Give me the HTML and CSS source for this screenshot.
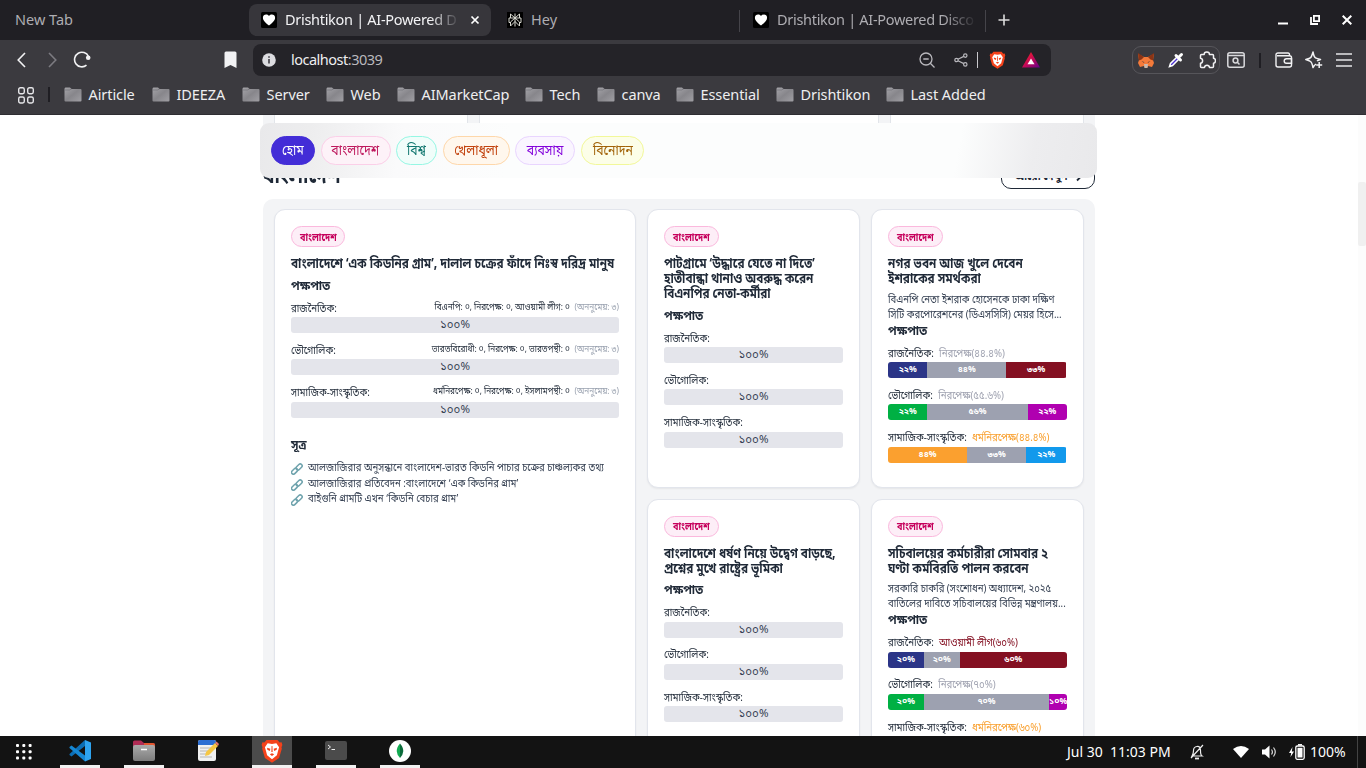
FILE: index.html
```html
<!DOCTYPE html>
<html lang="bn">
<head>
<meta charset="utf-8">
<title>Drishtikon | AI-Powered Discovery</title>
<link rel="stylesheet" href="styles.css">
</head>
<body>
<svg class="defs" width="0" height="0">
  <defs>
    <linearGradient id="folderFill" x1="0" y1="0" x2="1" y2="1"><stop offset="0" stop-color="#a5a4a9"/><stop offset=".5" stop-color="#87868b"/><stop offset="1" stop-color="#a09fa4"/></linearGradient>
    <linearGradient id="batFill" x1="0" y1="0" x2="1" y2="1"><stop offset="0" stop-color="#ff2a12"/><stop offset=".5" stop-color="#c80a55"/><stop offset="1" stop-color="#64008c"/></linearGradient>
    <linearGradient id="fileFill" x1="0" y1="0" x2="0" y2="1"><stop offset="0" stop-color="#aaa"/><stop offset="1" stop-color="#7d7d7d"/></linearGradient>
    <symbol id="folder" viewBox="0 0 18 15"><path d="M.5 2Q.5.5 1.500.5H6L7.500 2H16.500Q17.500 2 17.500 3V13.500Q17.500 14.500 16.500 14.500H1.500Q.5 14.500.5 13.500Z" fill="url(#folderFill)"/><path d="M1 3H5.500L7.500 2" stroke="#6d6c72" fill="none" stroke-width=".6"/></symbol>
    <symbol id="heart" viewBox="0 0 16 16"><rect width="16" height="16" rx="1.500" fill="#000"/><path d="M8 13.500C5.500 11.600 1.900 8.800 1.900 5.700 1.900 2.500 6 1.500 8 4.100 10 1.500 14.100 2.500 14.100 5.700 14.100 8.800 10.500 11.600 8 13.500Z" fill="#fff"/></symbol>
    <symbol id="lion" viewBox="0 0 20 22"><path d="M5 1H15L17 3.300 18.800 3 19.500 5.500 18.700 7.500 19 9 16.500 17.500 10 21.800 3.500 17.500 1 9 1.300 7.500.5 5.500 1.200 3 3 3.300Z" fill="#f4421b"/><path d="M6 4 10 4.600 14 4 16.500 7.500 15.500 11 14.500 15 10 18.500 5.500 15 4.500 11 3.500 7.500Z" fill="#fff"/><path d="M5.500 8 8.500 9 8 11 5.700 9.800ZM14.500 8 11.500 9 12 11 14.300 9.800ZM8 14 10 13 12 14 10 15.500ZM9.600 6.500H10.400L10.600 12H9.400Z" fill="#f4421b"/></symbol>
    <symbol id="chain" viewBox="0 0 12 12"><g fill="none" stroke="#6fa3ad" stroke-width="1.500"><rect x="-.5" y="6" width="7" height="3.800" rx="1.900" transform="rotate(-45 3 8) translate(.3 .6)"/><rect x="5" y="2" width="7" height="3.800" rx="1.900" transform="rotate(-45 8.500 4) translate(-.3 -.2)"/></g></symbol>
  </defs>
</svg>

<header class="browser">
  <div class="tabs">
    <div class="tab tab-new"><span class="t-new">New Tab</span></div>
    <div class="tab tab-active"><svg class="fav"><use href="#heart"/></svg><span class="tab-title fade t-act">Drishtikon | AI-Powered D</span>
      <svg class="close" viewBox="0 0 10 10"><path d="M1.500 1.500 8.500 8.500M8.500 1.500 1.500 8.500" stroke="#fff" stroke-width="1.700"/></svg></div>
    <div class="tab tab-hey"><svg class="fav" viewBox="0 0 16 16"><rect width="16" height="16" fill="#000"/><g stroke="#d8d8d0" fill="none"><path d="M8 1.500V14.500M3.500 2 8 6 12.500 2V6H3.500ZM8 6 3.500 10V14L8 9.500 12.500 14V10ZM3.500 6H2V10.500H4M12.500 6H14V10.500H12"/></g></svg><span class="tab-title">Hey</span></div>
    <div class="tab tab-last"><svg class="fav"><use href="#heart"/></svg><span class="tab-title fade">Drishtikon | AI-Powered Disco</span></div>
    <svg class="plus" viewBox="0 0 12 12"><path d="M6 .5V11.500M.5 6H11.500" stroke="#ddd" stroke-width="1.600"/></svg>
    <div class="window-buttons">
      <svg width="10" height="10" viewBox="0 0 10 10"><path d="M0 8.500H10" stroke="#fff" stroke-width="2"/></svg>
      <svg width="10" height="10" viewBox="0 0 10 10"><path d="M3.900.9H9.100V6.100H3.900ZM1 2V9H8" fill="none" stroke="#fff" stroke-width="1.800"/></svg>
      <svg width="10" height="10" viewBox="0 0 10 10"><path d="M.7.7 9.300 9.300M9.300.7.7 9.300" stroke="#fff" stroke-width="2"/></svg>
    </div>
  </div>

  <div class="toolbar">
    <svg class="back" viewBox="0 0 9 16"><path d="M8 1 1.200 8 8 15" fill="none" stroke="#f2f2f4" stroke-width="1.600"/></svg>
    <svg class="forward" viewBox="0 0 9 16"><path d="M1 1 7.800 8 1 15" fill="none" stroke="#7c7b81" stroke-width="1.600"/></svg>
    <svg class="reload" viewBox="0 0 18 18"><path d="M13.500 14.200A7.300 7.300 0 1 1 15.500 5.500" fill="none" stroke="#f2f2f4" stroke-width="1.600"/><circle cx="15.200" cy="6.800" r="2.300" fill="#f2f2f4"/></svg>
    <svg class="mark" viewBox="0 0 13 18"><path d="M2 .5H11Q12.500.5 12.500 2V17L6.500 14 .5 17V2Q.5.5 2 .5Z" fill="#f2f2f4"/></svg>
    <div class="address">
      <svg class="info" viewBox="0 0 14 14"><circle cx="7" cy="7" r="6.800" fill="#dcdce0"/><path d="M7 6V10.500M7 3.300V4.800" stroke="#45444a" stroke-width="1.700"/></svg>
      <span class="url">localhost<i>:3039</i></span>
      <svg class="lens" viewBox="0 0 16 16"><g fill="none" stroke="#b9b8bd" stroke-width="1.300"><circle cx="7" cy="7" r="6"/><path d="M11.300 11.300 15.500 15.500M4.300 7H9.700"/></g></svg>
      <svg class="share" viewBox="0 0 14 14"><g fill="none" stroke="#b9b8bd" stroke-width="1.200"><circle cx="2.500" cy="7" r="1.700"/><circle cx="11.300" cy="2.600" r="1.700"/><circle cx="11.300" cy="11.400" r="1.700"/><path d="M4 6.200 9.800 3.400M4 7.800 9.800 10.600"/></g></svg>
      <span class="rule"></span>
      <svg class="shield"><use href="#lion"/></svg>
      <svg class="bat" viewBox="0 0 18 16"><path d="M9 0 18 15.500H0Z" fill="url(#batFill)"/><path d="M9 6.500 12.500 12.300H5.500Z" fill="#fff"/></svg>
    </div>
    <div class="extensions">
      <svg width="16" height="15" viewBox="0 0 16 15"><path d="M0 1 6 4H10L16 1 15 7 16 10 14 14 10 13 9 15H7L6 13 2 14 0 10 1 7Z" fill="#f47a3a"/><path d="M0 0 6 4 3.500 6.500.8 7.500ZM16 0 10 4 12.500 6.500 15.200 7.500Z" fill="#8b3415"/><path d="M6 11H10L9.500 15H6.500Z" fill="#c7b8ae"/><path d="M3.500 8 6 9 6.300 10ZM12.500 8 10 9 9.700 10Z" fill="#26303c"/></svg>
      <svg width="16" height="16" viewBox="0 0 16 16"><path d="M1.500 14.500 2.500 11.500 9.500 4.500 11.500 6.500 4.500 13.500Z" fill="#4b32d2" stroke="#fff" stroke-width="1.500"/><path d="M8 3.500 12.500 8M10.500 5.500 13.500 2.500" stroke="#fff" stroke-width="3" stroke-linecap="round"/></svg>
      <svg width="18" height="18" viewBox="0 0 18 18"><path d="M3.500 3.500H6.200Q6 1 8.800 1T11.400 3.500H14.500Q15.500 3.500 15.500 4.500V7.200Q17.500 7.500 17.500 9.800T15.500 12.300V15.500Q15.500 16.500 14.500 16.500H11.500Q11.200 14.300 9 14.300T6.500 16.500H3.500Q2.500 16.500 2.500 15.500V12.300Q4.600 12 4.600 9.800T2.500 7.200V4.500Q2.500 3.500 3.500 3.500Z" fill="none" stroke="#f2f2f4" stroke-width="1.500" stroke-linejoin="round"/></svg>
    </div>
    <svg class="find" viewBox="0 0 18 16"><g fill="none" stroke="#d9d9dc" stroke-width="1.500"><rect x=".8" y=".8" width="16.400" height="14.400" rx="2"/><path d="M1 3.500H17"/><circle cx="8.500" cy="8.500" r="2.400"/><path d="M10.300 10.300 12.500 12.500"/></g></svg>
    <span class="bar-rule"></span>
    <svg class="wallet" viewBox="0 0 18 16"><g fill="none" stroke="#f2f2f4" stroke-width="1.400"><path d="M14.500 3.500V2.500Q14.500 1 13 1H3Q1 1 1 3V13Q1 15 3 15H14.500Q16.500 15 16.500 13V5.500Q16.500 3.700 14.500 3.700H2"/><path d="M16.500 6.800H11.500Q9.200 6.800 9.200 9T11.500 11.300H16.500Z"/></g></svg>
    <svg class="leo" viewBox="0 0 18 18"><g fill="none" stroke="#f2f2f4" stroke-width="1.500" stroke-linejoin="round"><path d="M11 13Q9.500 14 8 16.500 7 11.500 5.500 10.500T.8 8.500Q5 7.500 5.800 6.500T8 1Q9 6 10.500 6.800T15.500 8.500Q13 9.200 12 10"/><path d="M14.200 11V17M11.200 14H17.200"/></g></svg>
    <svg class="menu" viewBox="0 0 16 14"><path d="M0 1H16M0 7H16M0 13H16" stroke="#e5e5e8" stroke-width="1.600"/></svg>
  </div>

  <nav class="bookmarks">
    <svg class="apps" viewBox="0 0 16 17"><g fill="none" stroke="#e5e5e8" stroke-width="1.400"><rect x=".7" y=".7" width="5.600" height="6" rx="1.700"/><rect x="9.700" y=".7" width="5.600" height="6" rx="1.700"/><rect x=".7" y="10" width="5.600" height="6" rx="1.700"/><rect x="9.700" y="10" width="5.600" height="6" rx="1.700"/></g></svg>
    <span class="bar-rule"></span>
    <a class="w1"><svg><use href="#folder"/></svg>Airticle</a>
    <a class="w2"><svg><use href="#folder"/></svg>IDEEZA</a>
    <a class="w3"><svg><use href="#folder"/></svg>Server</a>
    <a class="w4"><svg><use href="#folder"/></svg>Web</a>
    <a class="w5"><svg><use href="#folder"/></svg>AIMarketCap</a>
    <a class="w6"><svg><use href="#folder"/></svg>Tech</a>
    <a class="w7"><svg><use href="#folder"/></svg>canva</a>
    <a class="w8"><svg><use href="#folder"/></svg>Essential</a>
    <a class="w9"><svg><use href="#folder"/></svg>Drishtikon</a>
    <a><svg><use href="#folder"/></svg>Last Added</a>
  </nav>
</header>

<main class="page">
  <div class="prev-panel"><div></div><div></div><div></div></div>
  <nav class="topics">
    <a class="home"><span>হোম</span></a><a class="pink"><span>বাংলাদেশ</span></a><a class="teal"><span>বিশ্ব</span></a><a class="orange"><span>খেলাধূলা</span></a><a class="purple"><span>ব্যবসায়</span></a><a class="yellow"><span>বিনোদন</span></a>
  </nav>
  <div class="section-head"><h2>বাংলাদেশ</h2><a class="more"><span>আরো দেখুন</span><svg width="10" height="10" viewBox="0 0 10 10"><path d="M0 5H8M5 1.500 8.500 5 5 8.500" fill="none" stroke="#1f2937" stroke-width="1.800"/></svg></a></div>
  <section class="panel">
    <article class="card lead">
      <span class="badge"><span>বাংলাদেশ</span></span>
      <h3>বাংলাদেশে ‘এক কিডনির গ্রাম’, দালাল চক্রের ফাঁদে নিঃস্ব দরিদ্র মানুষ</h3>
      <h4>পক্ষপাত</h4>
      <div class="metric"><p>রাজনৈতিক:<span class="counts">বিএনপি: ০, নিরপেক্ষ: ০, আওয়ামী লীগ: ০ <i>(অননুমেয়: ৩)</i></span></p><div class="bar">১০০%</div></div>
      <div class="metric"><p>ভৌগোলিক:<span class="counts">ভারতবিরোধী: ০, নিরপেক্ষ: ০, ভারতপন্থী: ০ <i>(অননুমেয়: ৩)</i></span></p><div class="bar">১০০%</div></div>
      <div class="metric"><p>সামাজিক-সাংস্কৃতিক:<span class="counts">ধর্মনিরপেক্ষ: ০, নিরপেক্ষ: ০, ইসলামপন্থী: ০ <i>(অননুমেয়: ৩)</i></span></p><div class="bar">১০০%</div></div>
      <h4 class="source-head">সূত্র</h4>
      <ul>
        <li><svg><use href="#chain"/></svg><span>আলজাজিরার অনুসন্ধানে বাংলাদেশ-ভারত কিডনি পাচার চক্রের চাঞ্চল্যকর তথ্য</span></li>
        <li><svg><use href="#chain"/></svg><span>আলজাজিরার প্রতিবেদন :বাংলাদেশে ‘এক কিডনির গ্রাম’</span></li>
        <li><svg><use href="#chain"/></svg><span>বাইগুনি গ্রামটি এখন ‘কিডনি বেচার গ্রাম’</span></li>
      </ul>
    </article>
    <article class="card">
      <span class="badge wide"><span>বাংলাদেশ</span></span>
      <h3>পাটগ্রামে ‘উদ্ধারে যেতে না দিতে’<br>হাতীবান্ধা থানাও অবরুদ্ধ করেন<br>বিএনপির নেতা-কর্মীরা</h3>
      <h4>পক্ষপাত</h4>
      <div class="metric"><p>রাজনৈতিক:</p><div class="bar">১০০%</div></div>
      <div class="metric"><p>ভৌগোলিক:</p><div class="bar">১০০%</div></div>
      <div class="metric"><p>সামাজিক-সাংস্কৃতিক:</p><div class="bar">১০০%</div></div>
    </article>
    <article class="card">
      <span class="badge wide"><span>বাংলাদেশ</span></span>
      <h3>নগর ভবন আজ খুলে দেবেন<br>ইশরাকের সমর্থকরা</h3>
      <p class="desc">বিএনপি নেতা ইশরাক হোসেনকে ঢাকা দক্ষিণ<br>সিটি করপোরেশনের (ডিএসসিসি) মেয়র হিসে...</p>
      <h4>পক্ষপাত</h4>
      <div class="metric"><p>রাজনৈতিক:<b class="c-gray">নিরপেক্ষ(৪৪.৪%)</b></p><div class="bar split"><span class="navy" style="width:22%">২২%</span><span class="gray" style="width:44%">৪৪%</span><span class="maroon" style="width:33.5%">৩৩%</span></div></div>
      <div class="metric"><p>ভৌগোলিক:<b class="c-gray">নিরপেক্ষ(৫৫.৬%)</b></p><div class="bar split"><span class="green" style="width:22%">২২%</span><span class="gray" style="width:56%">৫৬%</span><span class="magenta" style="width:22%">২২%</span></div></div>
      <div class="metric"><p>সামাজিক-সাংস্কৃতিক:<b class="c-orange">ধর্মনিরপেক্ষ(৪৪.৪%)</b></p><div class="bar split"><span class="amber" style="width:44.2%">৪৪%</span><span class="gray" style="width:33%">৩৩%</span><span class="blue" style="width:22.4%">২২%</span></div></div>
    </article>
    <article class="card">
      <span class="badge wide"><span>বাংলাদেশ</span></span>
      <h3>বাংলাদেশে ধর্ষণ নিয়ে উদ্বেগ বাড়ছে,<br>প্রশ্নের মুখে রাষ্ট্রের ভূমিকা</h3>
      <h4>পক্ষপাত</h4>
      <div class="metric"><p>রাজনৈতিক:</p><div class="bar">১০০%</div></div>
      <div class="metric"><p>ভৌগোলিক:</p><div class="bar">১০০%</div></div>
      <div class="metric"><p>সামাজিক-সাংস্কৃতিক:</p><div class="bar">১০০%</div></div>
    </article>
    <article class="card">
      <span class="badge wide"><span>বাংলাদেশ</span></span>
      <h3>সচিবালয়ের কর্মচারীরা সোমবার ২<br>ঘণ্টা কর্মবিরতি পালন করবেন</h3>
      <p class="desc">সরকারি চাকরি (সংশোধন) অধ্যাদেশ, ২০২৫<br>বাতিলের দাবিতে সচিবালয়ের বিভিন্ন মন্ত্রণালয়...</p>
      <h4>পক্ষপাত</h4>
      <div class="metric"><p>রাজনৈতিক:<b class="c-maroon">আওয়ামী লীগ(৬০%)</b></p><div class="bar split"><span class="navy" style="width:20%">২০%</span><span class="gray" style="width:20%">২০%</span><span class="maroon" style="width:60%">৬০%</span></div></div>
      <div class="metric"><p>ভৌগোলিক:<b class="c-gray">নিরপেক্ষ(৭০%)</b></p><div class="bar split"><span class="green" style="width:20%">২০%</span><span class="gray" style="width:70%">৭০%</span><span class="magenta" style="width:10%">১০%</span></div></div>
      <div class="metric"><p>সামাজিক-সাংস্কৃতিক:<b class="c-orange">ধর্মনিরপেক্ষ(৬০%)</b></p></div>
    </article>
  </section>
  <div class="scroll-track"><div class="scroll-thumb"></div></div>
</main>

<footer class="taskbar">
  <svg class="launcher" viewBox="0 0 16 16"><g fill="#fff"><rect width="3" height="3" rx="1"/><rect x="6.300" width="3" height="3" rx="1"/><rect x="12.600" width="3" height="3" rx="1"/><rect y="6.300" width="3" height="3" rx="1"/><rect x="6.300" y="6.300" width="3" height="3" rx="1"/><rect x="12.600" y="6.300" width="3" height="3" rx="1"/><rect y="12.600" width="3" height="3" rx="1"/><rect x="6.300" y="12.600" width="3" height="3" rx="1"/><rect x="12.600" y="12.600" width="3" height="3" rx="1"/></g></svg>
  <div class="app open"><svg width="22" height="22" viewBox="0 0 22 22"><path d="M16 0 22 2.500V19L16 21.500Z" fill="#2fa4f0"/><path d="M16 0V6L2.500 16.500.5 15V14Z" fill="#0c6eb5"/><path d="M16 21.500V15.500L2.500 5.500.5 7V8Z" fill="#1587d4"/></svg></div>
  <div class="app open"><svg width="24" height="22" viewBox="0 0 24 22"><path d="M1 2Q1 .5 2.500.5H9L12 3H21Q23 3 23 5V8H1Z" fill="#b12c55"/><path d="M12 3H21Q23 3 23 5V8H12Z" fill="#e1562e"/><rect x="1" y="5" width="22" height="16" rx="2" fill="url(#fileFill)"/><path d="M9 9.500H15" stroke="#fff" stroke-width="1.500"/></svg></div>
  <div class="app"><svg width="22" height="23" viewBox="0 0 22 23"><rect x="1" y="1" width="18" height="21" rx="2" fill="#f1f1f1"/><path d="M1 6V3Q1 1 3 1H17Q19 1 19 3V6Z" fill="#2d6fd3"/><path d="M3 9H14M3 12H12M3 15H10M3 18H15" stroke="#b5b5b5"/><path d="M8 17 9 13 18 4 21 7 12 16Z" fill="#f6c744"/><path d="M18 4 19.500 2.500 22 5 21 7Z" fill="#e8756a"/></svg></div>
  <div class="app open current"><svg width="22" height="24"><use href="#lion"/></svg></div>
  <div class="app open"><svg width="22" height="19" viewBox="0 0 22 19"><rect width="22" height="19" rx="2" fill="#4b4b4b"/><path d="M3 4 5.500 6 3 8M6.500 8.500H10" fill="none" stroke="#eee"/></svg></div>
  <div class="app open"><svg width="22" height="22" viewBox="0 0 22 22"><circle cx="11" cy="11" r="11" fill="#fff"/><path d="M11 3.500Q7.500 7.500 7.800 11.500T11 18Z" fill="#13aa52"/><path d="M11 3.500Q14.500 7.500 14.200 11.500T11 18Z" fill="#0b6b3a"/></svg></div>
  <div class="status">
    <span class="clock">Jul 30&nbsp; 11:03 PM</span>
    <svg class="bell" viewBox="0 0 14 16"><g fill="none" stroke="#eee" stroke-width="1.200"><path d="M2 12Q3.500 10 3.500 6.500T7 2.500 10.500 6.500 12 12ZM1 14 13 1"/><path d="M5 14.500H9" stroke-width="1.800"/></g></svg>
    <svg class="wifi" viewBox="0 0 16 12"><path d="M0 3Q8-3 16 3L8 12Z" fill="#fff"/></svg>
    <svg class="volume" viewBox="0 0 15 14"><path d="M0 4.500H3L7.500.5V13.500L3 9.500H0Z" fill="#fff"/><path d="M9.500 4.500Q11.300 7 9.500 9.500M11.500 2.500Q15 7 11.500 11.500" fill="none" stroke="#ddd" stroke-width="1.200"/></svg>
    <svg class="battery" viewBox="0 0 16 16"><path d="M3.500 3 0 9H2.200L1.500 13 5 7.500H2.800Z" fill="#fff"/><rect x="6.800" y="2" width="8.400" height="13.300" rx="1.500" fill="none" stroke="#fff" stroke-width="1.300"/><rect x="8.500" y="3.800" width="5" height="9.700" fill="#fff"/><path d="M9 .8H13" stroke="#fff" stroke-width="1.500"/></svg>
    <span class="percent">100%</span><span class="edge"></span>
  </div>
</footer>
</body>
</html>
```
FILE: styles.css
```css
* { box-sizing: border-box; }
body, h2, h3, h4, p, ul { margin: 0; padding: 0; }
body { width: 1366px; height: 768px; overflow: hidden; display: flex; flex-direction: column; background: #fff; font-family: "Noto Sans Bengali", "Noto Sans", sans-serif; color: #1f2937; }
svg { flex: none; display: block; }
i { font-style: normal; }
.defs { position: absolute; }

.browser { height: 115px; background: #3b3a3f; border-bottom: 1px solid #2e2d32; font-family: "Noto Sans", sans-serif; font-size: 14.5px; color: #eeeef0; flex: none; }
.tabs { height: 40px; background: #201f24; display: flex; align-items: center; color: #aeadb2; }
.tab { display: flex; align-items: center; height: 32px; white-space: nowrap; }
.tab span { padding-bottom: 2px; }
.tab-new { width: 249px; padding-left: 15px; }
.tab-active { width: 242px; border-radius: 8px; background: #37363b; padding-left: 12px; color: #f3f3f5; }
.tab-hey { width: 249px; padding-left: 16px; border-right: 1px solid transparent; border-image: linear-gradient(transparent 20%, #45444a 20%, #45444a 85%, transparent 85%) 1; }
.tab-last { width: 246px; padding-left: 13px; border-right: 1px solid transparent; border-image: linear-gradient(transparent 20%, #45444a 20%, #45444a 85%, transparent 85%) 1; }
.fav { width: 16px; height: 16px; margin-right: 8px; }
.tab-title.fade { letter-spacing: -.3px; width: 198px; -webkit-mask-image: linear-gradient(90deg, #000 84%, transparent 101%); mask-image: linear-gradient(90deg, #000 84%, transparent 101%); }
.tab-title.t-act { width: 173px; }
.close { width: 10px; height: 10px; margin-left: 12px; }
.plus { width: 12px; height: 12px; margin-left: 12px; }
.window-buttons { margin-left: auto; display: flex; gap: 22px; padding-right: 14px; }

.toolbar { height: 40px; display: flex; align-items: center; padding-left: 17px; }
.back, .forward { width: 9px; height: 16px; }
.forward { margin-left: 22px; }
.reload { width: 18px; height: 18px; margin-left: 16px; }
.mark { width: 13px; height: 18px; margin-left: 133px; }
.address { margin-left: 16px; width: 798px; height: 32px; border-radius: 8px; background: #242328; display: flex; align-items: center; padding-left: 9px; }
.info { width: 14px; height: 14px; }
.url { margin-left: 15px; width: 628px; letter-spacing: -.5px; padding-bottom: 2px; }
.url i { color: #b9b8bd; }
.lens { width: 16px; height: 16px; }
.share { width: 14px; height: 14px; margin-left: 19px; }
.rule { width: 1px; height: 16px; background: #c9c8cd; margin-left: 9px; }
.shield { width: 17px; height: 18px; margin-left: 10.500px; }
.bat { width: 18px; height: 16px; margin-left: 16.500px; }
.extensions { margin-left: 81px; width: 88px; height: 28px; border: 1px solid #56555a; border-radius: 9px; display: flex; align-items: center; padding-left: 5px; gap: 14px; }
.find { width: 18px; height: 16px; margin-left: 7px; }
.bar-rule { width: 2px; height: 15px; background: #1f1e23; margin-left: 14px; }
.wallet { width: 18px; height: 16px; margin-left: 14px; }
.leo { width: 18px; height: 18px; margin-left: 12px; }
.menu { width: 16px; height: 14px; margin-left: 13px; }

.bookmarks { height: 28px; display: flex; align-items: center; padding-left: 18px; letter-spacing: -.08px; }
.apps { width: 16px; height: 17px; margin-top: 2px; }
.bookmarks .bar-rule { margin: 0 14px 0 14px; }
.bookmarks a { display: flex; align-items: center; gap: 6.500px; white-space: nowrap; }
.bookmarks a svg { width: 18px; height: 15px; }
.w1 { width: 88px; } .w2 { width: 90px; } .w3 { width: 84px; } .w4 { width: 71px; } .w5 { width: 128px; }
.w6 { width: 72px; } .w7 { width: 79px; } .w8 { width: 100px; } .w9 { width: 110px; }

.page { flex: none; height: 621px; position: relative; overflow: hidden; padding-left: 263px; }
.prev-panel { width: 832px; height: 20px; background: #f3f4f6; padding: 0 11px; display: grid; grid-template-columns: 194px 400px 194px; gap: 11px; }
.prev-panel div { background: #fff; border: solid #e2e5ea; border-width: 0 1px; }
.topics { position: absolute; z-index: 1; left: 260px; top: 8px; width: 837px; height: 55px; border-radius: 9px; background: linear-gradient(100deg, #e9e9eb 0, #ededee 6%, #fafafb 17%, #fcfdfd 30%, #fcfdfd 83%, #ededef 92%, #e9e9eb 100%); display: flex; align-items: center; gap: 5.600px; padding-left: 11px; }
.topics a { height: 29px; border-radius: 15px; border: 1px solid; font-size: 13.5px; display: flex; align-items: center; justify-content: center; padding-top: 2px; }
.topics span { transform: scaleX(.91); }
.topics .home { width: 44px; background: #432dd7; border-color: #432dd7; color: #fff; }
.topics .pink { width: 70px; background: #fdf2f8; border-color: #fbcfe8; color: #be185d; }
.topics .teal { width: 41px; background: #f0fdfa; border-color: #96f7e4; color: #0f766e; }
.topics .orange { width: 67px; background: #fff7ed; border-color: #fed7aa; color: #c2410c; }
.topics .purple { width: 60px; background: #faf5ff; border-color: #e9d5ff; color: #8200db; }
.topics .yellow { width: 63px; background: #fcfee8; border-color: #f2f89a; color: #a16207; }
.section-head { width: 832px; height: 64px; display: flex; justify-content: space-between; align-items: flex-end; padding-bottom: 10px; }
.section-head h2 { font-size: 22px; line-height: 28px; margin-bottom: -3px; transform: scaleX(.87); transform-origin: left; }
.more { width: 94px; height: 28px; border: 1px solid #1f2937; border-radius: 10px; display: flex; align-items: center; justify-content: center; gap: 4px; font-size: 10.500px; font-weight: 700; line-height: 14px; padding-top: 4px; }
.panel { width: 832px; height: 700px; background: #f3f4f6; border-radius: 10px; padding: 10px 11px; display: grid; grid-template-columns: 362px 213px 213px; grid-template-rows: 279px 290px; gap: 10.600px 11px; }
.card { background: #fff; border: 1px solid #e2e5ec; border-radius: 11px; padding: 16px; box-shadow: 0 1px 2px rgba(0,0,0,.06); min-width: 0; white-space: nowrap; display: flex; flex-direction: column; }
.lead { grid-row: span 2; }
.badge { align-self: flex-start; width: 54px; height: 21px; flex: none; border: 1px solid #fbb8dd; border-radius: 11px; background: #fdeef7; color: #c6005c; font-size: 10.500px; font-weight: 700; display: flex; align-items: center; justify-content: center; margin-bottom: 11px; padding-top: 2px; }
.wide { width: 55px; }
.badge span { transform: scaleX(.86); }
/* condensed Bengali setting for card text */
h3, h4, .desc, .metric p, li span { transform-origin: left center; }
h3 { font-size: 13.500px; line-height: 15px; font-weight: 700; margin-bottom: 5.500px; transform: scaleX(.872); width: 114.700%; }
h4 { font-size: 13px; line-height: 15px; font-weight: 700; margin-bottom: 7px; transform: scaleX(.9); }
.desc { font-size: 11px; line-height: 15px; color: #364153; margin: -.7px 0 .7px; transform: scaleX(.87); width: 114.900%; }
.metric { margin-bottom: 9.900px; }
.metric p { display: flex; font-size: 11px; line-height: 16px; height: 15px; margin-bottom: 1.500px; transform: scaleX(.88); width: 113.600%; }
.metric b { font-weight: 400; margin-left: 6px; letter-spacing: -.05px; }
.counts { margin-left: auto; font-size: 9.300px; line-height: 13px; }
.counts i { color: #99a1af; margin-left: 3px; }
.bar { height: 16px; line-height: 16px; border-radius: 3px; background: #e4e5eb; text-align: center; font-size: 11.500px; color: #364153; overflow: hidden; }
.split { display: flex; background: none; color: #fff; font-size: 8.500px; font-weight: 700; }
.c-gray { color: #a0a3b1; } .c-orange { color: #f9a02f; } .c-maroon { color: #841022; }
.navy { background: #2b3587; } .gray { background: #9da1b0; } .maroon { background: #841022; } .green { background: #00b043; }
.magenta { background: #b000b0; } .amber { background: #fba02f; } .blue { background: #1299ec; }
.source-head { margin-top: 10.500px; margin-bottom: 7px; }
ul { list-style: none; }
li { display: flex; align-items: center; gap: 5px; height: 15.600px; font-size: 10.800px; color: #364153; }
li span { transform: scaleX(.884); }
li svg { width: 12px; height: 12px; margin-top: 2px; }
.scroll-track { position: absolute; right: 0; top: 0; width: 8px; height: 621px; background: #fcfcfc; }
.scroll-thumb { margin-top: 67px; height: 64px; background: #f0f0f0; border-radius: 2px; }

.taskbar { height: 32px; flex: none; background: #131313; color: #fff; display: flex; align-items: center; font-family: "Noto Sans", sans-serif; font-size: 14px; }
.launcher { width: 16px; height: 16px; margin: 0 28px 0 16px; }
.app { width: 40px; height: 32px; margin-right: 24px; display: flex; align-items: center; justify-content: center; border-bottom: 3px solid transparent; }
.open { border-color: #f1f1f1; }
.current { background: #4b4b4b; }
.status { margin-left: auto; width: 299px; display: flex; align-items: center; height: 32px; white-space: nowrap; }
.clock { width: 123px; padding-bottom: 2px; }
.bell { width: 14px; height: 16px; }
.wifi { width: 16px; height: 12px; margin-left: 29px; }
.volume { width: 15px; height: 14px; margin-left: 13px; }
.battery { width: 16px; height: 16px; margin-left: 12px; }
.percent { margin-left: 5px; padding-bottom: 1px; }
.edge { width: 1px; height: 32px; background: #444; margin-left: 11px; }
```
